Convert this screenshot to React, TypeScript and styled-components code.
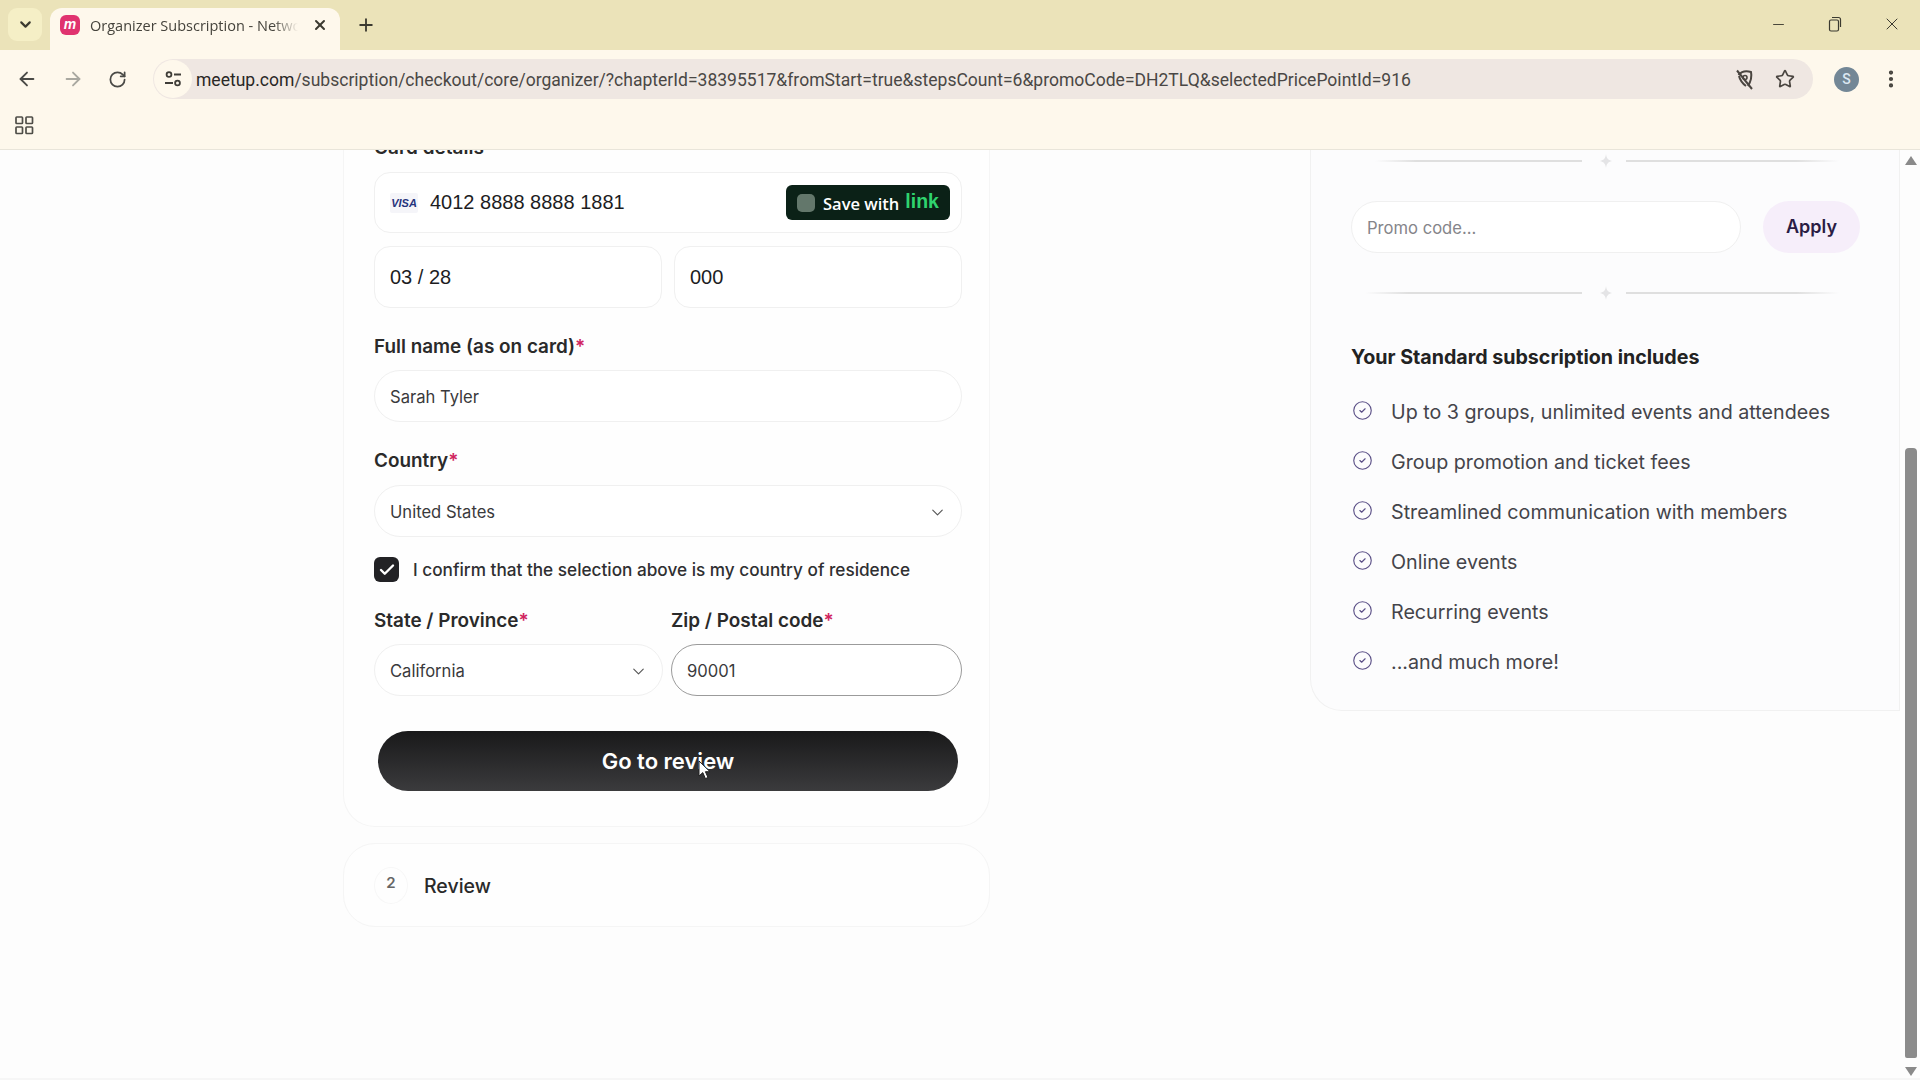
import React from 'react';
import styled, { createGlobalStyle } from 'styled-components';
import {
  ArrowLeft,
  ArrowRight,
  Check,
  ChevronDown,
  CircleCheck,
  EllipsisVertical,
  Minus,
  Plus,
  RotateCw,
  Star,
  X,
} from 'lucide-react';

const GlobalStyle = createGlobalStyle`
  html, body {
    margin: 0;
    height: 100%;
    overflow: hidden;
    background: #fdfdfd;
  }
  * {
    box-sizing: border-box;
  }
`;

const features = [
  'Up to 3 groups, unlimited events and attendees',
  'Group promotion and ticket fees',
  'Streamlined communication with members',
  'Online events',
  'Recurring events',
  '...and much more!',
];

const url =
  '/subscription/checkout/core/organizer/?chapterId=38395517&fromStart=true&stepsCount=6&promoCode=DH2TLQ&selectedPricePointId=916';

export default function App() {
  return (
    <Window>
      <GlobalStyle />
      <TabStrip>
        <TabMenu>
          <ChevronDown size={17} strokeWidth={3} />
        </TabMenu>
        <Tab>
          <Favicon>m</Favicon>
          <TabTitle>Organizer Subscription - Network</TabTitle>
          <X size={16} strokeWidth={3} color="#3b3a30" />
        </Tab>
        <NewTab>
          <Plus size={20} strokeWidth={2.2} />
        </NewTab>
        <WindowControls>
          <Minus size={17} strokeWidth={1.3} />
          <RestoreIcon />
          <X size={20} strokeWidth={1.2} />
        </WindowControls>
      </TabStrip>

      <Toolbar>
        <NavButtons>
          <ArrowLeft size={22} strokeWidth={2} color="#4a4a46" />
          <ArrowRight size={22} strokeWidth={2} color="#a9a8a0" />
          <RotateCw size={19} strokeWidth={2.2} color="#4a4a46" />
        </NavButtons>
        <AddressBar>
          <SiteIcon>
            <TuneIcon />
          </SiteIcon>
          <Url>
            meetup.com<UrlPath>{url}</UrlPath>
          </Url>
          <AddressActions>
            <TrackingIcon />
            <Star size={20} strokeWidth={2} color="#4a4540" />
          </AddressActions>
        </AddressBar>
        <Avatar>S</Avatar>
        <EllipsisVertical size={22} strokeWidth={2.6} color="#44423c" />
      </Toolbar>

      <BookmarkBar>
        <AppsIcon />
      </BookmarkBar>

      <Viewport>
        <Page>
          <LeftColumn>
            <PaymentCard>
              <ClippedLabel>Card details</ClippedLabel>
              <CardField>
                <VisaMark>VISA</VisaMark>
                <CardText>4012 8888 8888 1881</CardText>
                <SaveWithLink>
                  <SaveBox />
                  <SaveText>Save with</SaveText>
                  <LinkWord>link</LinkWord>
                </SaveWithLink>
              </CardField>
              <CardRow>
                <CardField>
                  <CardText>03 / 28</CardText>
                </CardField>
                <CardField>
                  <CardText>000</CardText>
                </CardField>
              </CardRow>

              <FieldLabel $top={27}>
                Full name (as on card)<Required>*</Required>
              </FieldLabel>
              <PillField>Sarah Tyler</PillField>

              <FieldLabel $top={27} $bottom={12}>
                Country<Required>*</Required>
              </FieldLabel>
              <PillField>
                United States
                <ChevronDown size={19} strokeWidth={1.4} color="#555" />
              </PillField>

              <ConfirmRow>
                <CheckBox>
                  <Check size={18} strokeWidth={3.2} color="#fff" />
                </CheckBox>
                <ConfirmText>I confirm that the selection above is my country of residence</ConfirmText>
              </ConfirmRow>

              <AddressGrid>
                <div>
                  <FieldLabel $top={0}>
                    State / Province<Required>*</Required>
                  </FieldLabel>
                  <PillField>
                    California
                    <ChevronDown size={19} strokeWidth={1.4} color="#555" />
                  </PillField>
                </div>
                <div>
                  <FieldLabel $top={0}>
                    Zip / Postal code<Required>*</Required>
                  </FieldLabel>
                  <PillField $focused>90001</PillField>
                </div>
              </AddressGrid>

              <ReviewButton>
                Go to review
                <Cursor />
              </ReviewButton>
            </PaymentCard>

            <StepCard>
              <StepNumber>2</StepNumber>
              <StepTitle>Review</StepTitle>
            </StepCard>
          </LeftColumn>

          <SummaryCard>
            <Divider $inset={24}>
              <DividerLine $length={207} />
              <Sparkle />
              <DividerLine $length={213} $flip />
            </Divider>
            <PromoRow>
              <PromoInput>Promo code...</PromoInput>
              <ApplyButton>Apply</ApplyButton>
            </PromoRow>
            <Divider $inset={14}>
              <DividerLine $length={217} />
              <Sparkle />
              <DividerLine $length={213} $flip />
            </Divider>
            <IncludesTitle>Your Standard subscription includes</IncludesTitle>
            <FeatureList>
              {features.map((feature) => (
                <FeatureItem key={feature}>
                  <CircleCheck size={21} strokeWidth={1.3} color="#5a4f86" />
                  <span>{feature}</span>
                </FeatureItem>
              ))}
            </FeatureList>
          </SummaryCard>
        </Page>

        <Scrollbar>
          <ScrollArrow />
          <ScrollTrack>
            <ScrollThumb />
          </ScrollTrack>
          <ScrollArrow $down />
        </Scrollbar>
      </Viewport>
    </Window>
  );
}

function RestoreIcon() {
  return (
    <svg width="16" height="18" viewBox="0 0 16 18" fill="none" stroke="#3b3a30" strokeWidth="1.2">
      <rect x="2.5" y="5" width="9" height="11" rx="1.5" />
      <path d="M5 2.5h6.5a2 2 0 0 1 2 2V12" />
    </svg>
  );
}

function TuneIcon() {
  return (
    <svg width="20" height="20" viewBox="0 0 20 20" fill="none" stroke="#3f3d38" strokeWidth="1.8">
      <circle cx="6" cy="5.5" r="2.4" />
      <path d="M11 5.5h7M2 14h8" />
      <circle cx="14.5" cy="14" r="2.4" />
    </svg>
  );
}

function TrackingIcon() {
  return (
    <svg width="24" height="24" viewBox="0 0 24 24" fill="none" stroke="#4a4540" strokeWidth="2">
      <path d="M5.5 8c3-3.5 8-4.5 12.5-3 1 4.500 0 9-3 14" />
      <path d="M6 9c1 4 3.500 7.500 7 10" />
      <circle cx="12" cy="10.500" r="2" strokeWidth="1.600" />
      <path d="M4 3.500 19 22" />
    </svg>
  );
}

function AppsIcon() {
  return (
    <svg width="19" height="19" viewBox="0 0 19 19" fill="none" stroke="#4f4e48" strokeWidth="1.7">
      <rect x="1" y="1" width="6.500" height="6.500" rx="0.800" />
      <rect x="11" y="1" width="6.500" height="6.500" rx="0.800" />
      <rect x="1" y="11" width="6.500" height="6.500" rx="0.800" />
      <rect x="11" y="11" width="6.500" height="6.500" rx="0.800" />
    </svg>
  );
}

function Sparkle() {
  return (
    <SparkleMark width="12" height="14" viewBox="0 0 12 14">
      <path d="M6 0c.6 4 1.800 6 6 7-4.200 1-5.400 3-6 7-.6-4-1.800-6-6-7 4.200-1 5.400-3 6-7z" fill="#e4e4e6" />
    </SparkleMark>
  );
}

function Cursor() {
  return (
    <CursorMark width="13" height="20" viewBox="0 0 13 20">
      <path d="M1 1v15l3.800-3.400 2.600 6 2.600-1.100-2.600-5.800H12z" fill="#fff" stroke="#222" strokeWidth="1" />
    </CursorMark>
  );
}

const Window = styled.div`
  width: 1920px;
  height: 1080px;
  display: flex;
  flex-direction: column;
  overflow: hidden;
  font-family: Inter, 'Liberation Sans', sans-serif;
`;

const TabStrip = styled.div`
  height: 50px;
  flex: none;
  display: flex;
  align-items: flex-end;
  background: #ebe3b9;
  padding-left: 8px;
  color: #3b3a30;
`;

const TabMenu = styled.div`
  width: 34px;
  height: 33px;
  margin-bottom: 9px;
  border-radius: 9px;
  background: #f5efc6;
  display: flex;
  align-items: center;
  justify-content: center;
`;

const Tab = styled.div`
  width: 290px;
  height: 42px;
  margin-left: 8px;
  padding: 0 12px 8px 10px;
  border-radius: 12px 12px 0 0;
  background: #fef8ec;
  display: flex;
  align-items: center;
`;

const Favicon = styled.div`
  width: 20px;
  height: 20px;
  flex: none;
  border-radius: 6px;
  background: #e0336f;
  color: #fff;
  font: italic 700 14px/19px 'Liberation Sans', sans-serif;
  text-align: center;
`;

const TabTitle = styled.div`
  width: 208px;
  margin: 0 14px 0 10px;
  overflow: hidden;
  white-space: nowrap;
  font: 400 14.5px 'Open Sans', sans-serif;
  color: #45433c;
  mask-image: linear-gradient(to right, #000 88%, transparent);
`;

const NewTab = styled.div`
  margin: 0 0 15px 16px;
  display: flex;
`;

const WindowControls = styled.div`
  margin-left: auto;
  width: 150px;
  height: 50px;
  padding: 0 18px 2px 0;
  display: flex;
  align-items: center;
  justify-content: space-between;
`;

const Toolbar = styled.div`
  height: 59px;
  flex: none;
  padding: 9px 17px 10px 16px;
  background: #fef8ec;
  display: flex;
  align-items: center;
`;

const NavButtons = styled.div`
  width: 137px;
  display: flex;
  align-items: center;
  gap: 24px;
`;

const AddressBar = styled.div`
  width: 1660px;
  height: 40px;
  border-radius: 20px;
  background: #efe7e2;
  display: flex;
  align-items: center;
`;

const SiteIcon = styled.div`
  width: 38px;
  height: 38px;
  margin-left: 1px;
  border-radius: 50%;
  background: #fef8ec;
  display: flex;
  align-items: center;
  justify-content: center;
`;

const Url = styled.div`
  margin: 1px 0 0 4px;
  white-space: nowrap;
  font: 400 17.55px Roboto, sans-serif;
  color: #2a2826;
`;

const UrlPath = styled.span`
  color: #4a4745;
`;

const AddressActions = styled.div`
  margin-left: auto;
  padding-right: 18px;
  display: flex;
  align-items: center;
  gap: 18px;
`;

const Avatar = styled.div`
  width: 25px;
  height: 25px;
  margin: 0 21px;
  flex: none;
  border-radius: 50%;
  background: #738796;
  color: #dbe8f2;
  font: 500 14px/25px Roboto, sans-serif;
  text-align: center;
`;

const BookmarkBar = styled.div`
  height: 41px;
  flex: none;
  padding: 7px 0 0 15px;
  background: #fef8ec;
  border-bottom: 1px solid #e9e5da;
`;

const Viewport = styled.div`
  flex: 1;
  min-height: 0;
  display: flex;
  overflow: hidden;
  background: #fdfdfd;
  border-bottom: 2px solid #f6f6f6;
`;

const Page = styled.div`
  flex: 1;
  display: flex;
  align-items: flex-start;
  justify-content: space-between;
  padding-left: 343px;
`;

const LeftColumn = styled.div`
  width: 647px;
  margin-top: -14px;
  display: flex;
  flex-direction: column;
  gap: 16px;
`;

const PaymentCard = styled.div`
  padding: 0 27px 35px 30px;
  background: #fefefe;
  border: 1px solid #f5f5f5;
  border-top: 0;
  border-radius: 0 0 32px 32px;
`;

const ClippedLabel = styled.div`
  height: 24px;
  margin-bottom: 12px;
  font-size: 19px;
  line-height: 24px;
  font-weight: 600;
  color: #2a2a2a;
`;

const CardField = styled.div`
  flex: 1;
  height: 61px;
  padding: 0 11px 0 15px;
  border: 1px solid #f0f0f0;
  border-radius: 16px;
  background: #fff;
  display: flex;
  align-items: center;
`;

const CardRow = styled.div`
  margin-top: 13px;
  display: flex;
  gap: 12px;

  > div {
    height: 62px;
  }
`;

const VisaMark = styled.div`
  width: 28px;
  height: 20px;
  margin-right: 12px;
  background: #f5f5f9;
  border-radius: 2px;
  color: #26337c;
  font: italic 700 11px/20px 'Liberation Sans', sans-serif;
  text-align: center;
`;

const CardText = styled.div`
  font: 400 20px 'Liberation Sans', sans-serif;
  color: #1d1d1f;
`;

const SaveWithLink = styled.div`
  width: 164px;
  height: 35px;
  margin-left: auto;
  padding-left: 11px;
  border-radius: 6px;
  background: #0b2117;
  display: flex;
  align-items: center;
`;

const SaveBox = styled.div`
  width: 18px;
  height: 18px;
  border-radius: 5px;
  background: #63776b;
`;

const SaveText = styled.span`
  margin: 2px 6px 0 8px;
  font: 600 16.5px 'Open Sans', sans-serif;
  color: #fff;
  white-space: nowrap;
`;

const LinkWord = styled.span`
  margin-top: -3px;
  font: 700 19.5px 'Liberation Sans', sans-serif;
  color: #2fd36e;
`;

const FieldLabel = styled.div<{ $top: number; $bottom?: number }>`
  height: 24px;
  margin: ${(p) => p.$top}px 0 ${(p) => p.$bottom ?? 11}px;
  font-size: 18.9px;
  line-height: 24px;
  font-weight: 600;
  color: #2a2a2a;
  white-space: nowrap;
`;

const Required = styled.span`
  color: #d0245e;
`;

const PillField = styled.div<{ $focused?: boolean }>`
  height: 52px;
  padding: 2px 14px 0 15px;
  border: 1px solid ${(p) => (p.$focused ? '#9b9b9b' : '#f0f0f0')};
  border-radius: 26px;
  background: #fff;
  display: flex;
  align-items: center;
  justify-content: space-between;
  font-size: 16.6px;
  color: #3a3a3c;
`;

const ConfirmRow = styled.div`
  height: 25px;
  margin-top: 20px;
  display: flex;
  align-items: center;
  gap: 14px;
`;

const CheckBox = styled.div`
  width: 25px;
  height: 25px;
  border-radius: 6px;
  background: #222225;
  display: flex;
  align-items: center;
  justify-content: center;
`;

const ConfirmText = styled.div`
  font-size: 17.2px;
  font-weight: 500;
  color: #2f2f31;
  white-space: nowrap;
`;

const AddressGrid = styled.div`
  margin-top: 27px;
  display: grid;
  grid-template-columns: 289px 291px;
  gap: 8px;
`;

const ReviewButton = styled.div`
  position: relative;
  height: 60px;
  margin: 35px 4px 0;
  border-radius: 30px;
  background: linear-gradient(#19191a, #3b3b3d);
  color: #fff;
  font-size: 22px;
  font-weight: 600;
  line-height: 60px;
  text-align: center;
`;

const CursorMark = styled.svg`
  position: absolute;
  left: 320px;
  top: 29px;
`;

const StepCard = styled.div`
  height: 84px;
  padding-left: 30px;
  background: #fefefe;
  border: 1px solid #f5f5f5;
  border-radius: 32px;
  display: flex;
  align-items: center;
  gap: 16px;
`;

const StepNumber = styled.div`
  width: 34px;
  height: 37px;
  border: 1px solid #f7f7f7;
  border-radius: 50%;
  padding-top: 5px;
  text-align: center;
  font-size: 15px;
  font-weight: 600;
  color: #666;
`;

const StepTitle = styled.div`
  margin-top: 1px;
  font-size: 19.5px;
  font-weight: 500;
  color: #2a2a2a;
`;

const SummaryCard = styled.div`
  width: 590px;
  height: 561px;
  padding: 0 39px 0 40px;
  background: #fcfcfd;
  border: 1px solid #f1f1f1;
  border-top: 0;
  border-radius: 0 0 0 32px;
`;

const Divider = styled.div<{ $inset: number }>`
  height: 22px;
  padding-left: ${(p) => p.$inset}px;
  display: flex;
  align-items: center;
`;

const DividerLine = styled.div<{ $length: number; $flip?: boolean }>`
  flex: none;
  width: ${(p) => p.$length}px;
  height: 2px;
  background: linear-gradient(to ${(p) => (p.$flip ? 'left' : 'right')}, transparent, #dfdfdf 20%);
`;

const SparkleMark = styled.svg`
  flex: none;
  margin: 0 14px 0 18px;
`;

const PromoRow = styled.div`
  margin: 29px 0;
  display: flex;
  justify-content: space-between;
`;

const PromoInput = styled.div`
  width: 390px;
  height: 52px;
  padding-left: 15px;
  border: 1px solid #f0f0f0;
  border-radius: 26px;
  background: #fff;
  font-size: 16.6px;
  line-height: 52px;
  color: #85858a;
`;

const ApplyButton = styled.div`
  width: 97px;
  height: 52px;
  border-radius: 26px;
  background: #f6eefa;
  color: #2a1c44;
  font-size: 18px;
  font-weight: 600;
  line-height: 51px;
  text-align: center;
`;

const IncludesTitle = styled.h3`
  margin: 40px 0 0;
  font-size: 19.65px;
  line-height: 26px;
  font-weight: 700;
  color: #222;
`;

const FeatureList = styled.ul`
  list-style: none;
  margin: 27px 0 0;
  padding: 0;
  display: flex;
  flex-direction: column;
  gap: 20px;
`;

const FeatureItem = styled.li`
  height: 30px;
  display: flex;
  align-items: center;
  gap: 18px;
  font-size: 19.7px;
  color: #44444a;

  svg {
    flex: none;
    margin: -4px 0 0 1px;
  }
`;

const Scrollbar = styled.div`
  width: 20px;
  flex: none;
  padding: 6px 3px 2px 5px;
  display: flex;
  flex-direction: column;
  align-items: center;
`;

const ScrollArrow = styled.div<{ $down?: boolean }>`
  flex: none;
  width: 0;
  height: 0;
  border-left: 6px solid transparent;
  border-right: 6px solid transparent;
  border-${(p) => (p.$down ? 'top' : 'bottom')}: 9px solid #8a8a8a;
`;

const ScrollTrack = styled.div`
  flex: 1;
  width: 100%;
  padding: 283px 0 9px;
`;

const ScrollThumb = styled.div`
  height: 100%;
  border-radius: 4px 4px 2px 2px;
  background: #8b8b8b;
`;
